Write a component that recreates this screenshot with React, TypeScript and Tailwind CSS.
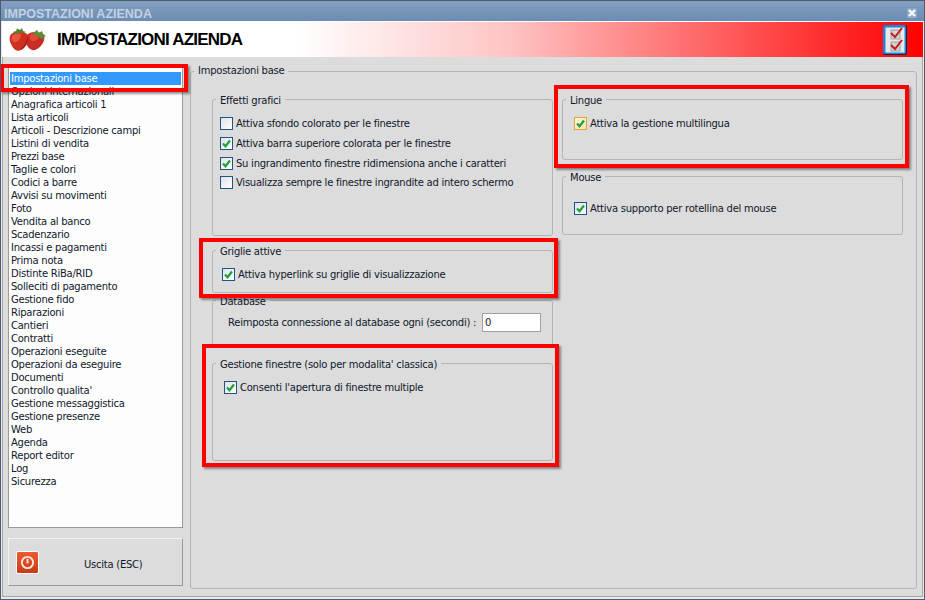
const MENU = [
  "Impostazioni base",
  "Opzioni internazionali",
  "Anagrafica articoli 1",
  "Lista articoli",
  "Articoli - Descrizione campi",
  "Listini di vendita",
  "Prezzi base",
  "Taglie e colori",
  "Codici a barre",
  "Avvisi su movimenti",
  "Foto",
  "Vendita al banco",
  "Scadenzario",
  "Incassi e pagamenti",
  "Prima nota",
  "Distinte RiBa/RID",
  "Solleciti di pagamento",
  "Gestione fido",
  "Riparazioni",
  "Cantieri",
  "Contratti",
  "Operazioni eseguite",
  "Operazioni da eseguire",
  "Documenti",
  "Controllo qualita'",
  "Gestione messaggistica",
  "Gestione presenze",
  "Web",
  "Agenda",
  "Report editor",
  "Log",
  "Sicurezza",
];

const EFFECTS = [
  { label: "Attiva sfondo colorato per le finestre", checked: false, cls: "h-[20px]" },
  { label: "Attiva barra superiore colorata per le finestre", checked: true, cls: "h-[20px]" },
  { label: "Su ingrandimento finestre ridimensiona anche i caratteri", checked: true, cls: "h-[20px]" },
  { label: "Visualizza sempre le finestre ingrandite ad intero schermo", checked: false, cls: "h-[19px]" },
];

function Check({ label, checked, hover }: { label: string; checked: boolean; hover?: boolean }) {
  return (
    <label className="flex items-center gap-[3px] whitespace-nowrap">
      <span
        className={
          "flex h-[13px] w-[13px] shrink-0 items-center justify-center border bg-gradient-to-br " +
          (hover
            ? "border-[#e2a53a] from-[#fdf3d8] to-[#fbe3a8]"
            : "border-[#1f5580] from-[#dfe3e8] to-[#ffffff]")
        }
      >
        {checked && (
          <svg viewBox="0 0 11 11" className="h-[11px] w-[11px]">
            <path d="M2 5.5 L4.5 8.2 L9 2.5" fill="none" stroke="#21a03a" strokeWidth="2.2" />
          </svg>
        )}
      </span>
      <span>{label}</span>
    </label>
  );
}

function Group({
  title,
  className,
  bodyClassName,
  children,
}: {
  title: string;
  className: string;
  bodyClassName?: string;
  children?: React.ReactNode;
}) {
  return (
    <fieldset className={"rounded-[3px] border border-[#b4b4b4] " + className}>
      <legend className="ml-[3px] h-[13px] px-[4px] leading-[15px]">{title}</legend>
      <div className={bodyClassName}>{children}</div>
    </fieldset>
  );
}

// the red marks drawn on top of the screenshot
function Mark({ className }: { className: string }) {
  return (
    <div
      className={
        "pointer-events-none absolute z-10 border-4 border-[#ff0000] shadow-[2px_2px_2px_rgba(0,0,0,0.4)] " +
        className
      }
    />
  );
}

function Strawberries() {
  return (
    <svg viewBox="0 0 38 24" className="h-[24px] w-[38px] shrink-0">
      {/* right berry */}
      <path d="M18 7 C21 3 31 3 35 7 C37 12 32 20 26 22 C21 23 17 18 17 13 Z" fill="#c92c22" />
      <path d="M21 7 C24 5 29 5 31 7 C30 11 26 14 23 13 C21 12 20 9 21 7 Z" fill="#e2493a" />
      <path d="M24 5 L28 2 L30 5 L33 3 L34 6 L37 8 L34 9 L35 12 L32 10 L29 9 L26 7 Z" fill="#5d8a34" />
      {/* left berry */}
      <path d="M1 8 C3 3 14 2 18 6 C21 11 18 19 12 22 C9 24 5 22 3 18 C1 15 0 11 1 8 Z" fill="#d0301f" />
      <path d="M3 8 C6 5 11 5 12 7 C12 11 8 15 5 14 C3 13 2 10 3 8 Z" fill="#ea5540" />
      <path d="M13 20 C16 17 18 13 18 8 C20 12 18 18 12 22 Z" fill="#9c1d14" />
      <path d="M4 4 L7 3 L8 0.5 L11 2 L13 0 L14 3 L17 4 L13 5 L9 5 L6 6 Z" fill="#55802a" />
    </svg>
  );
}

function ChecklistIcon() {
  return (
    <svg viewBox="0 0 24 30" className="h-[30px] w-[24px] shrink-0">
      <rect x="0" y="0" width="24" height="30" rx="2" fill="#0c2a4a" />
      <rect x="0" y="0" width="23" height="29" rx="2" fill="#1f84dc" />
      <rect x="2.5" y="2.5" width="19" height="25" fill="#e8e8e8" />
      <rect x="8" y="5" width="9" height="9" fill="#d2d2d2" stroke="#a0a0a0" />
      <rect x="8" y="17" width="9" height="9" fill="#d2d2d2" stroke="#a0a0a0" />
      <path d="M8 8 L12 12 L19 3 M8 20 L12 24 L19 15" fill="none" stroke="#c41a1a" strokeWidth="2" />
    </svg>
  );
}

export default function App() {
  return (
    <div className="relative flex h-[600px] w-[925px] flex-col overflow-hidden border border-[#4d5c6e] bg-[#e6e8ea] font-['DejaVu_Sans',sans-serif] text-[10px] leading-[13px] tracking-[-0.25px] text-[#10182a]">
      <div className="flex h-[20px] shrink-0 items-center justify-between bg-gradient-to-b from-[#83a0c2] to-[#6c8cb3] pl-[3px] pr-[7px] pt-[4px]">
        <span className="mt-[2px] font-['Liberation_Sans',sans-serif] text-[12.5px] font-bold tracking-normal text-[#c3d1e2]">
          IMPOSTAZIONI AZIENDA
        </span>
        <span className="flex h-[10px] w-[10px] items-center justify-center rounded-[1px] bg-[#8ea8c6]">
          <svg viewBox="0 0 9 9" className="h-[8px] w-[8px]">
            <path d="M1 1 L8 8 M8 1 L1 8" stroke="#ffffff" strokeWidth="2.4" />
          </svg>
        </span>
      </div>

      <div className="mx-[1px] flex h-[36px] shrink-0 items-center border-t border-white bg-[linear-gradient(90deg,#ffffff_0%,#ffffff_32%,#ffc4c4_55%,#ff4040_85%,#ff0000_100%)] pl-[7px] pr-[16px]">
        <Strawberries />
        <h1 className="ml-[10px] flex-1 font-['Liberation_Sans',sans-serif] text-[17px] font-bold tracking-[-0.8px] text-black">
          IMPOSTAZIONI AZIENDA
        </h1>
        <ChecklistIcon />
      </div>

      <div className="mx-[1px] mb-[2px] flex min-h-0 flex-1 gap-[7px] border border-t-0 border-[#a8a8a8] bg-[#dcdcdc] pl-[5px] pr-[5px]">
        <div className="flex w-[175px] shrink-0 flex-col pt-[8px]">
          <div className="relative h-[463px] border border-[#9a9a9a] border-t-[#a8a8a8] bg-[#fdfdfd] px-[1px] pt-[6px]">
            <ul>
              {MENU.map((item, i) => (
                <li
                  key={item}
                  className={
                    "h-[13px] whitespace-nowrap pl-[1px] " +
                    (i === 0 ? "bg-[#3399ff] text-white" : "")
                  }
                >
                  {item}
                </li>
              ))}
            </ul>
          </div>
          <button
            type="button"
            className="mt-[10px] flex h-[48px] items-center border border-[#f2f2f2] border-b-[#9a9a9a] border-r-[#9a9a9a] bg-[#dcdcdc] pl-[7px]"
          >
            <span className="flex h-[23px] w-[23px] items-center justify-center rounded-[2px] border border-white bg-gradient-to-b from-[#ee5a30] to-[#c93a14]">
              <svg viewBox="0 0 16 16" className="h-[15px] w-[15px]">
                <circle cx="8" cy="8" r="6" fill="none" stroke="#ffe9e0" strokeWidth="2" />
                <path d="M8 4 L8 9" stroke="#ffe9e0" strokeWidth="2" />
              </svg>
            </span>
            <span className="ml-[45px] mt-[4px]">Uscita (ESC)</span>
          </button>
        </div>

        <fieldset className="mb-[7px] mt-[8px] min-w-0 flex-1 rounded-[3px] border border-[#b4b4b4]">
          <legend className="ml-[3px] h-[13px] px-[4px] leading-[11px]">Impostazioni base</legend>
          <div className="flex gap-[9px] pl-[21px] pt-[15px]">
            <div className="flex w-[341px] shrink-0 flex-col">
              <Group title="Effetti grafici" className="h-[143px]" bodyClassName="pl-[7px] pt-[7px]">
                {EFFECTS.map((e) => (
                  <div key={e.label} className={"flex items-center " + e.cls}>
                    <Check label={e.label} checked={e.checked} />
                  </div>
                ))}
              </Group>

              <div className="relative mt-[8px]">
                <Group title="Griglie attive" className="h-[49px]" bodyClassName="pl-[9px] pt-[11px]">
                  <Check label="Attiva hyperlink su griglie di visualizzazione" checked />
                </Group>
                <Mark className="-left-[13px] -right-[5px] -top-[6px] h-[60px]" />
              </div>

              <Group title="Database" className="mt-[1px] h-[52px]" bodyClassName="pl-[15px] pt-[6px]">
                <div className="flex items-center">
                  <span className="w-[254px] whitespace-nowrap">Reimposta connessione al database ogni (secondi) :</span>
                  <input
                    readOnly
                    value="0"
                    className="h-[19px] w-[59px] border border-[#a0a0a0] bg-white px-[2px] text-[10px] outline-none"
                  />
                </div>
              </Group>

              <div className="relative mt-[11px]">
                <Group
                  title="Gestione finestre (solo per modalita' classica)"
                  className="h-[104px]"
                  bodyClassName="pl-[11px] pt-[11px]"
                >
                  <Check label="Consenti l'apertura di finestre multiple" checked />
                </Group>
                <Mark className="-left-[10px] -right-[6px] -top-[13px] h-[123px]" />
              </div>
            </div>

            <div className="flex w-[341px] shrink-0 flex-col">
              <div className="relative">
                <Group title="Lingue" className="h-[67px]" bodyClassName="pl-[11px] pt-[11px]">
                  <Check label="Attiva la gestione multilingua" checked hover />
                </Group>
                <Mark className="-left-[8px] -right-[6px] -top-[8px] h-[83px]" />
              </div>
              <Group title="Mouse" className="mt-[10px] h-[65px]" bodyClassName="pl-[11px] pt-[19px]">
                <Check label="Attiva supporto per rotellina del mouse" checked />
              </Group>
            </div>
          </div>
        </fieldset>
      </div>

      <Mark className="left-[-1px] top-[63px] h-[28px] w-[188px]" />
    </div>
  );
}
